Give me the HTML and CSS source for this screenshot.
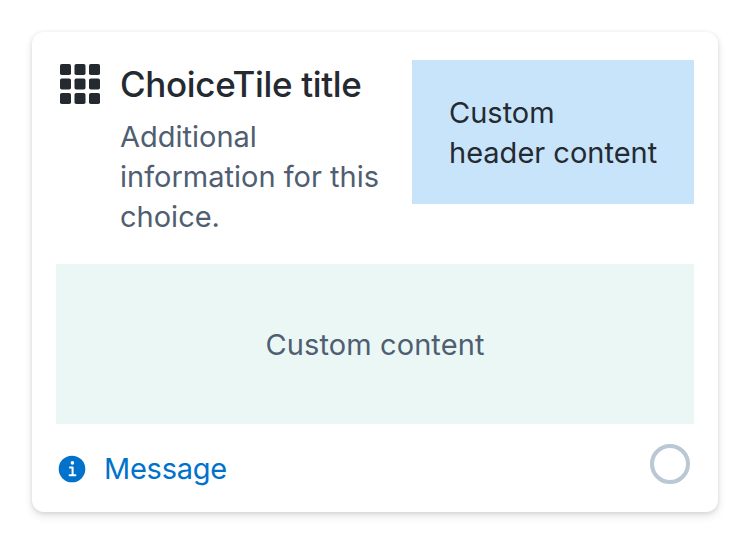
FILE: index.html
```html
<!DOCTYPE html>
<html lang="en">
<head>
<meta charset="utf-8">
<title>ChoiceTile</title>
<link rel="stylesheet" href="styles.css">
</head>
<body>
<label class="tile">
  <div class="header">
    <svg class="grid-icon" viewBox="0 0 40 40" fill="currentColor" aria-hidden="true">
      <rect x="0" y="0" width="11" height="11" rx="1.8"/><rect x="14.5" y="0" width="11" height="11" rx="1.8"/><rect x="29" y="0" width="11" height="11" rx="1.8"/>
      <rect x="0" y="14.5" width="11" height="11" rx="1.8"/><rect x="14.5" y="14.5" width="11" height="11" rx="1.8"/><rect x="29" y="14.5" width="11" height="11" rx="1.8"/>
      <rect x="0" y="29" width="11" height="11" rx="1.8"/><rect x="14.5" y="29" width="11" height="11" rx="1.8"/><rect x="29" y="29" width="11" height="11" rx="1.8"/>
    </svg>
    <div class="intro">
      <div class="title">ChoiceTile title</div>
      <div class="description">Additional<br>information for this<br>choice.</div>
    </div>
    <div class="custom-header">Custom<br>header content</div>
  </div>
  <div class="custom-content">Custom content</div>
  <div class="footer">
    <svg class="info-icon" viewBox="0 0 28 28" aria-hidden="true">
      <circle cx="14" cy="14" r="13.3" fill="#0172cb"/>
      <circle cx="14.4" cy="7.9" r="1.8" fill="#fff"/>
      <path d="M12 12.6h2.6v7.2M11.6 20.2h5.8" fill="none" stroke="#fff" stroke-width="2" stroke-linecap="round" stroke-linejoin="round"/>
    </svg>
    <span class="message">Message</span>
    <span class="radio"></span>
  </div>
</label>
</body>
</html>
```
FILE: styles.css
```css
* { box-sizing: border-box; }
body { margin: 0; padding: 32px; background: #fff; font-family: Inter, sans-serif; }
.tile { display: block; width: 686px; height: 480px; padding: 28px 24px 24px; border-radius: 12px; background: #fff; box-shadow: 0 4px 8px rgba(37,42,49,.12), 0 1px 4px rgba(37,42,49,.12); font-size: 29px; line-height: 40px; }
.header { display: flex; height: 204px; }
.grid-icon { width: 40px; height: 40px; margin: 4px 20px 0 4px; color: #252a31; flex: none; }
.intro { width: 292px; flex: none; white-space: nowrap; }
.title { font-size: 35px; font-weight: 500; line-height: 49px; letter-spacing: -.35px; color: #252a31; }
.description { margin-top: 8px; color: #4f5e71; }
.custom-header { width: 282px; height: 144px; padding: 33px 37px 0; background: #c7e4fa; color: #252a31; white-space: nowrap; }
.custom-content { display: flex; align-items: center; justify-content: center; height: 160px; padding-top: 2px; background: #ebf7f5; color: #4f5e71; letter-spacing: .1px; }
.footer { display: flex; align-items: center; height: 90px; padding: 0 4px 0 2px; }
.info-icon { width: 28px; height: 28px; }
.message { margin-left: 18px; color: #0172cb; letter-spacing: -.25px; }
.radio { width: 40px; height: 40px; margin: -10px 0 0 auto; border: 4px solid #bac7d5; border-radius: 50%; }
```
